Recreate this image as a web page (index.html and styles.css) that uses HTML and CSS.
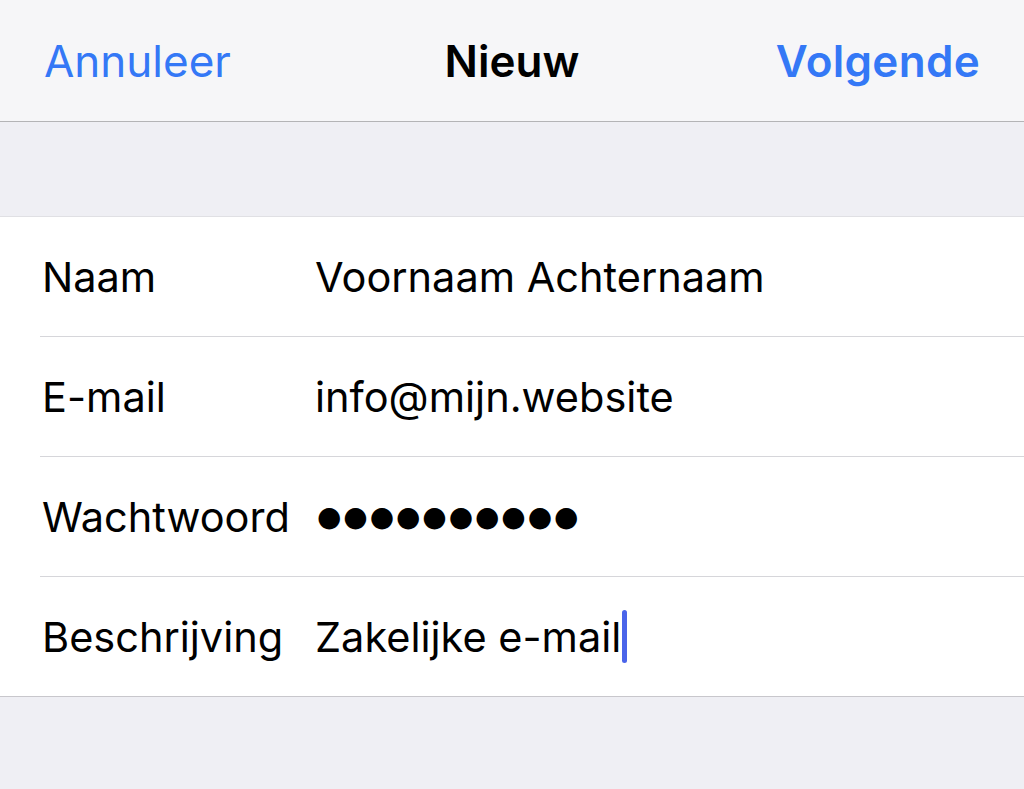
FILE: index.html
```html
<!DOCTYPE html>
<html lang="nl">
<head>
    <meta charset="UTF-8">
    <meta name="viewport" content="width=device-width, initial-scale=1.0">
    <title>Nieuw</title>
    <link rel="stylesheet" href="styles.css">
</head>
<body>
    <!-- Navigation bar -->
    <div class="nav-bar">
        <div class="nav-button nav-cancel">Annuleer</div>
        <div class="nav-title">Nieuw</div>
        <div class="nav-button nav-next">Volgende</div>
    </div>

    <div class="spacer"></div>

    <!-- Account form -->
    <div class="form-section">
        <div class="form-row">
            <div class="form-label">Naam</div>
            <div class="form-value">Voornaam Achternaam</div>
        </div>
        <div class="form-row">
            <div class="form-label">E-mail</div>
            <div class="form-value">info@mijn.website</div>
        </div>
        <div class="form-row">
            <div class="form-label">Wachtwoord</div>
            <div class="form-value password">●●●●●●●●●●</div>
        </div>
        <div class="form-row">
            <div class="form-label">Beschrijving</div>
            <div class="form-value">Zakelijke e-mail<span class="caret"></span></div>
        </div>
    </div>
</body>
</html>
```

FILE: styles.css
```css
* {
    margin: 0;
    padding: 0;
    box-sizing: border-box;
}

body {
    height: 100vh;
    overflow: hidden;
    font-family: 'Inter', 'Roboto', sans-serif;
    background: #efeff4;
    color: #000;
}

/* Navigation bar */
.nav-bar {
    height: 122px;
    background: #f6f6f8;
    border-bottom: 1px solid #b4b4b6;
    display: flex;
    align-items: center;
    justify-content: space-between;
    padding: 0 44px 0 44px;
    font-size: 44px;
}

.nav-button {
    color: #3478f6;
    width: 260px;
}

.nav-next {
    font-weight: 600;
    text-align: right;
    letter-spacing: 0.3px;
}

.nav-title {
    font-weight: 600;
    color: #000;
}

.spacer {
    height: 94px;
}

/* Form */
.form-section {
    background: #fff;
    border-top: 1px solid #e0e0e4;
    border-bottom: 1px solid #c8c7cc;
}

.form-row {
    display: flex;
    align-items: center;
    height: 120px;
    margin-left: 40px;
    border-bottom: 1px solid #d6d6da;
    font-size: 41.5px;
}

.form-row:last-child {
    height: 119px;
    border-bottom: none;
}

.form-label {
    width: 275px;
    padding-left: 2px;
}

.form-value {
    display: flex;
    align-items: center;
}

.password {
    font-family: 'DejaVu Sans', sans-serif;
    font-size: 28px;
    letter-spacing: 1.9px;
    padding-left: 2px;
}

.caret {
    display: inline-block;
    width: 5px;
    height: 53px;
    margin-left: 1px;
    border-radius: 3px;
    background: #4a64ea;
}
```
